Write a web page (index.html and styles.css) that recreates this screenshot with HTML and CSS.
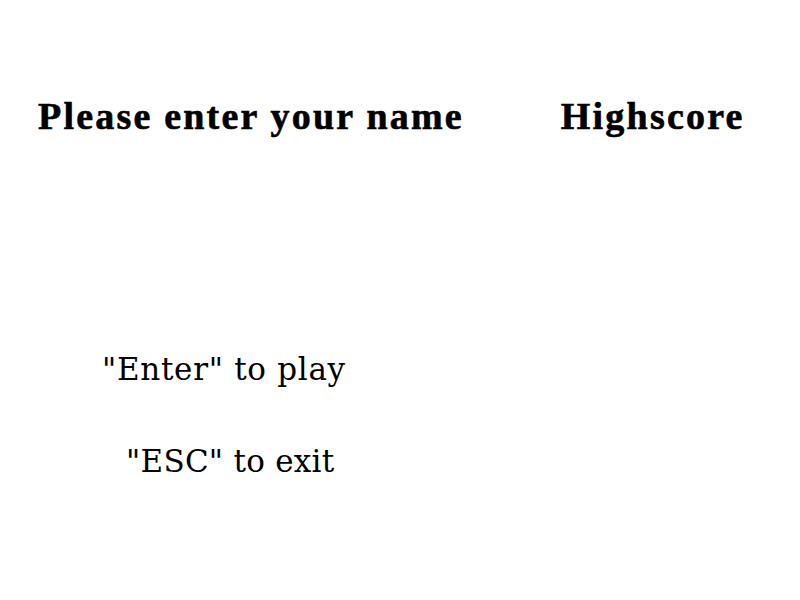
FILE: index.html
```html
<!DOCTYPE html>
<html>
<head>
<meta charset="utf-8">
<link rel="stylesheet" href="styles.css">
</head>
<body>
<div class="screen">
  <div class="col left">
    <h1 class="title">Please enter your name</h1>
    <div class="hint hint-play">"Enter" to play</div>
    <div class="hint hint-exit">"ESC" to exit</div>
  </div>
  <div class="col right">
    <h1 class="title">Highscore</h1>
  </div>
</div>
</body>
</html>
```
FILE: styles.css
```css
html, body {
  margin: 0;
  padding: 0;
  background: #ffffff;
}
.screen {
  width: 800px;
  height: 600px;
  display: flex;
  padding: 94px 0 0 38px;
  box-sizing: border-box;
  gap: 97px;
}
.col {
  display: flex;
  flex-direction: column;
}
.title {
  margin: 0;
  font-family: "Liberation Serif", serif;
  font-weight: bold;
  font-size: 38px;
  line-height: 44px;
  letter-spacing: 2.2px;
  -webkit-text-stroke: 0.6px #000;
  color: #000;
  white-space: nowrap;
}
.hint {
  font-family: "DejaVu Serif", serif;
  font-size: 31px;
  line-height: 40px;
  letter-spacing: 0.7px;
  color: #000;
  white-space: nowrap;
}
.hint-play {
  margin: 211px 0 0 64px;
}
.hint-exit {
  margin: 52px 0 0 88px;
  letter-spacing: 0.25px;
}
```
